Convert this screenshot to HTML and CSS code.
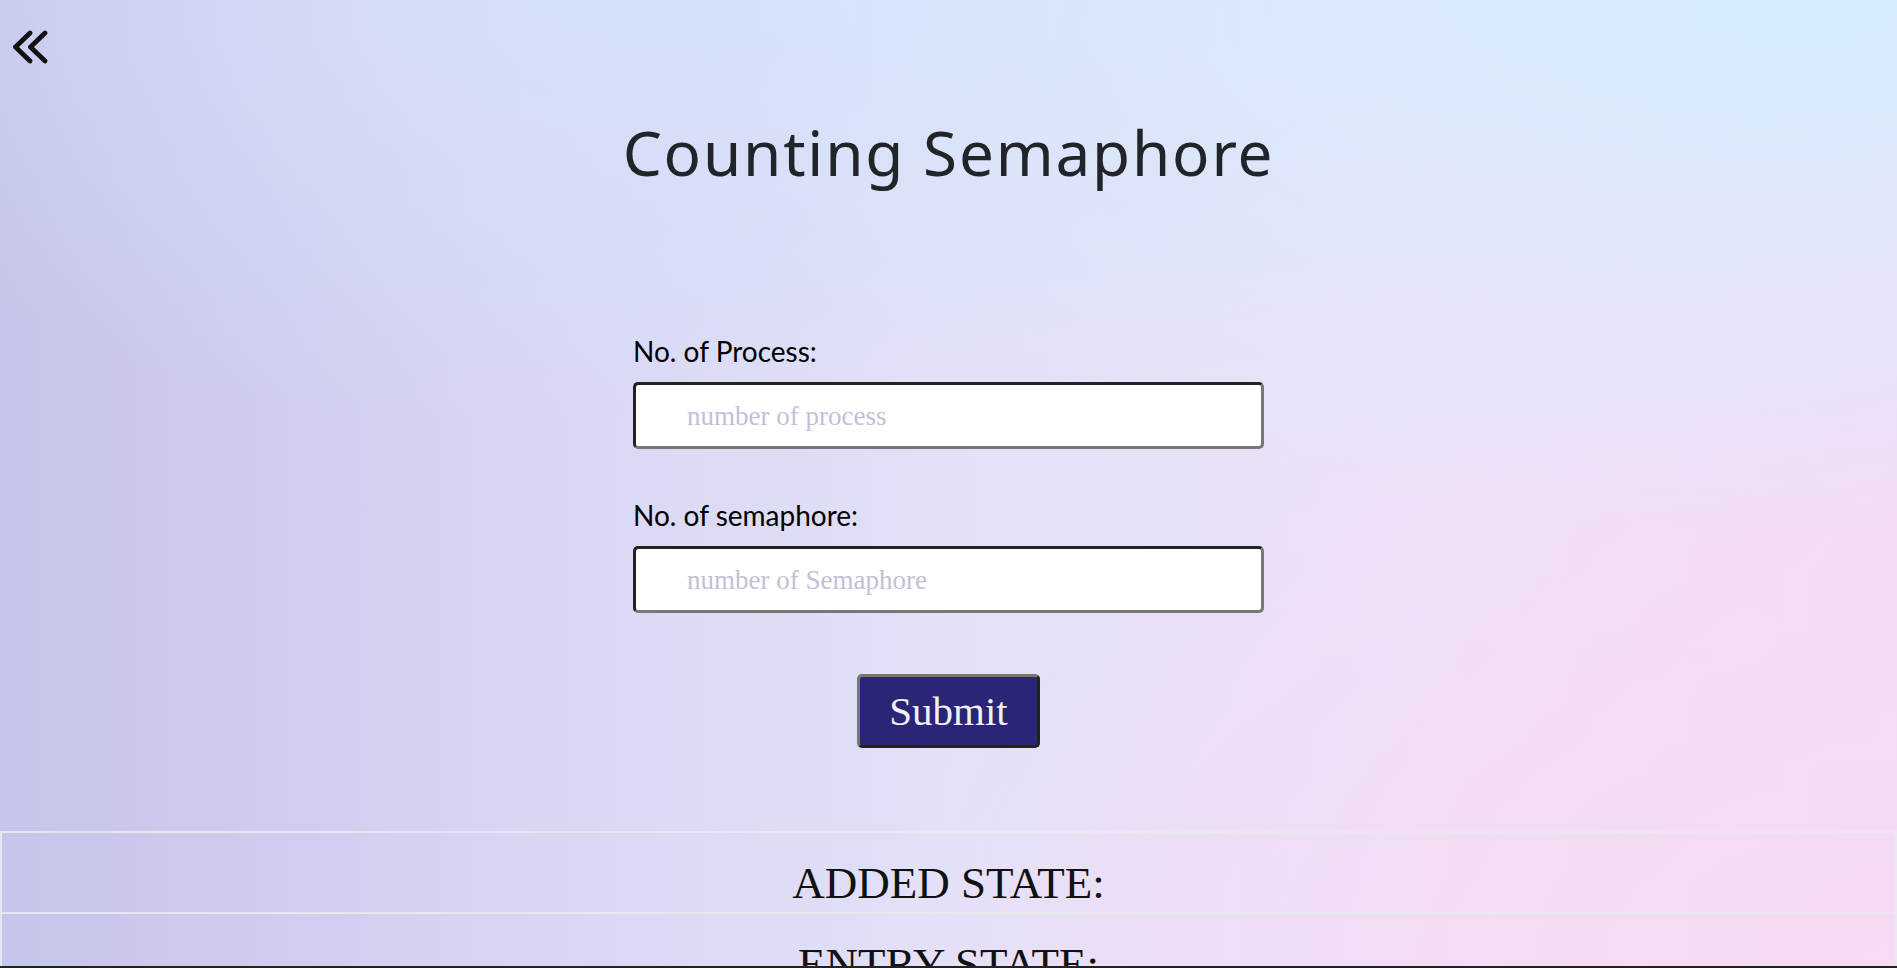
FILE: index.html
```html
<!DOCTYPE html>
<html lang="en">
<head>
<meta charset="utf-8">
<title>Counting Semaphore</title>
<link rel="stylesheet" href="styles.css">
</head>
<body>
<div class="topbar">
  <a class="back" href="#" aria-label="Back">
    <svg viewBox="0 0 36 34" width="36" height="34"><path d="M18 3 L3.5 17 L18 31 M33 3 L18.5 17 L33 31" fill="none" stroke="#111" stroke-width="4.8" stroke-linecap="round" stroke-linejoin="round"/></svg>
  </a>
</div>
<h1 class="title">Counting Semaphore</h1>
<form class="form">
  <label class="label" for="proc">No. of Process:</label>
  <input class="field" id="proc" type="text" placeholder="number of process">
  <label class="label second" for="sem">No. of semaphore:</label>
  <input class="field" id="sem" type="text" placeholder="number of Semaphore">
  <div class="actions"><button class="submit" type="button">Submit</button></div>
</form>
<table class="states">
  <tr><td>ADDED STATE:</td></tr>
  <tr><td>ENTRY STATE:</td></tr>
</table>
<div class="screen-edge"></div>
</body>
</html>
```
FILE: styles.css
```css
html {
  overflow-y: scroll;
}
html::-webkit-scrollbar {
  width: 3px;
  background: #ececf0;
}
html::-webkit-scrollbar-thumb {
  background: #ececf0;
}
body {
  margin: 0;
  min-height: 100vh;
  font-family: "Liberation Serif", serif;
  color: #111;
  background:
    radial-gradient(ellipse 60% 55% at 95% 0%, rgba(212, 237, 254, 1) 0%, rgba(212, 237, 254, 0) 100%),
    radial-gradient(ellipse 55% 60% at 100% 100%, rgba(247, 218, 244, 1) 0%, rgba(247, 218, 244, 0) 100%),
    radial-gradient(ellipse 50% 45% at 35% 0%, rgba(212, 226, 250, 0.9) 0%, rgba(212, 226, 250, 0) 100%),
    linear-gradient(to right, #c5c4ea 0%, #d6d4f2 25%, #e3e1f8 50%, #ede0f6 75%, #f2dcf4 100%);
  background-attachment: fixed;
}
.topbar {
  padding: 30px 12px 0;
  height: 34px;
}
.back {
  display: block;
  width: 36px;
  height: 34px;
}
.back svg {
  display: block;
}
.title {
  margin: 51px 0 0;
  text-align: center;
  font-family: "Noto Sans", sans-serif;
  font-weight: 400;
  font-size: 62px;
  line-height: 74px;
  letter-spacing: 1.8px;
  color: #212529;
}
.form {
  width: 631px;
  margin: 146px auto 0;
  display: flex;
  flex-direction: column;
}
.label {
  font-family: Lato, sans-serif;
  font-size: 28px;
  line-height: 33px;
  color: #000;
  margin-bottom: 14px;
}
.label.second {
  margin-top: 50px;
}
.field {
  box-sizing: border-box;
  width: 631px;
  height: 67px;
  padding: 2px 20px 0 51px;
  border-width: 3px;
  border-style: solid;
  border-color: #222 #777 #777 #222;
  border-radius: 5px;
  background: #fff;
  font-family: "Liberation Serif", serif;
  font-size: 27px;
  color: #222;
  outline: none;
}
.field::placeholder {
  color: #c3bfd6;
}
.actions {
  display: flex;
  justify-content: center;
  margin-top: 61px;
}
.submit {
  box-sizing: border-box;
  width: 183px;
  height: 74px;
  padding: 0;
  border-width: 3px;
  border-style: solid;
  border-color: #777 #222 #222 #777;
  border-radius: 5px;
  background: #2b2577;
  color: #f2f0f4;
  font-family: "Liberation Serif", serif;
  font-size: 41px;
}
.states {
  width: 100%;
  margin-top: 83px;
  border-collapse: collapse;
}
.states td {
  border: 2px solid rgba(232, 232, 238, 0.95);
  text-align: center;
  font-size: 45px;
  padding: 24px 0 3px;
  color: #111;
}
.screen-edge {
  position: fixed;
  left: 0;
  right: 0;
  bottom: 0;
  height: 2px;
  background: #222;
}
```
